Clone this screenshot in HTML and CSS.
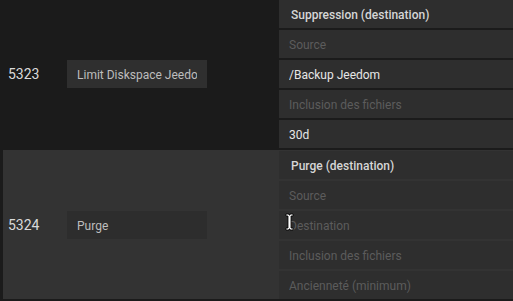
FILE: index.html
```html
<!DOCTYPE html>
<html lang="en">
<head>
    <meta charset="UTF-8">
    <title>Jobs</title>
    <link rel="stylesheet" href="styles.css">
</head>
<body>
    <div class="job-table">
        <!-- Job 5323 -->
        <div class="job-row">
            <div class="job-id">5323</div>
            <div class="job-name">
                <input type="text" class="field" value="Limit Diskspace Jeedom">
            </div>
            <div class="job-options">
                <div class="field field-type">Suppression (destination)</div>
                <input type="text" class="field" placeholder="Source">
                <input type="text" class="field" value="/Backup Jeedom">
                <input type="text" class="field" placeholder="Inclusion des fichiers">
                <input type="text" class="field" value="30d">
            </div>
        </div>

        <!-- Job 5324 -->
        <div class="job-row active">
            <div class="job-id">5324</div>
            <div class="job-name">
                <input type="text" class="field" value="Purge">
            </div>
            <div class="job-options">
                <div class="field field-type">Purge (destination)</div>
                <input type="text" class="field" placeholder="Source">
                <input type="text" class="field" placeholder="Destination">
                <input type="text" class="field" placeholder="Inclusion des fichiers">
                <input type="text" class="field" placeholder="Ancienneté (minimum)">
            </div>
        </div>
    </div>

    <!-- text cursor over the Destination field -->
    <svg class="cursor" width="9" height="18" viewBox="0 0 9 18">
        <path d="M1 1h3v1h1V1h3v2H6v12h2v2H5v-1H4v1H1v-2h2V3H1z" fill="#fff" stroke="#000" stroke-width="0.8"/>
    </svg>
</body>
</html>
```

FILE: styles.css
```css
body {
    margin: 0;
    background-color: #1b1b1b;
    font-family: Roboto, "Liberation Sans", sans-serif;
    overflow: hidden;
}

.job-table {
    display: flex;
    flex-direction: column;
    gap: 2px;
}

.job-row {
    display: flex;
    align-items: center;
    border-left: 3px solid #1b1b1b;
    background-color: #1b1b1b;
}

.job-row.active {
    padding-top: 1px;
    background-color: #333333;
}

.job-id {
    width: 59px;
    padding-left: 5px;
    color: #dadada;
    font-size: 14px;
}

.job-name {
    width: 212px;
}

.job-name .field {
    width: 140px;
    background-color: #2f2f2f;
    color: #bdbdbd;
}

.job-row.active .job-name .field {
    background-color: #2d2d2d;
}

.job-options {
    flex: 1;
    display: flex;
    flex-direction: column;
    gap: 2px;
}

.field {
    box-sizing: border-box;
    height: 28px;
    margin: 0;
    padding: 2px 10px 0;
    border: none;
    outline: none;
    background-color: #2e2e2e;
    color: #e6e6e6;
    font-family: Roboto, "Liberation Sans", sans-serif;
    font-size: 12px;
    line-height: 26px;
}

.field::placeholder {
    color: #5c5c5c;
}

.field-type {
    padding-left: 12px;
    color: #d6d6d6;
    font-weight: 500;
}

.cursor {
    position: absolute;
    left: 285px;
    top: 213px;
}
```
